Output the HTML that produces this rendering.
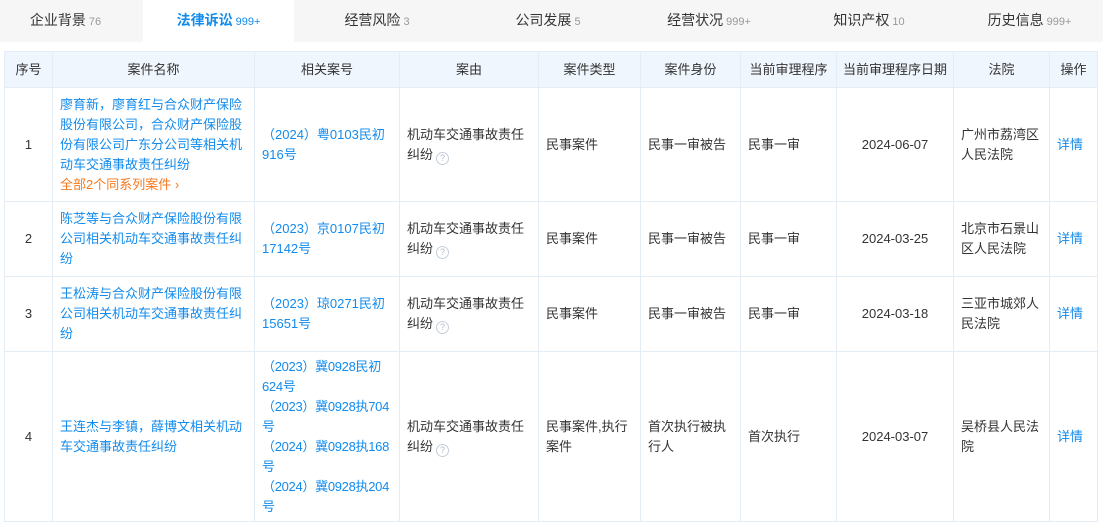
<!DOCTYPE html>
<html><head><meta charset="utf-8"><style>
*{margin:0;padding:0;box-sizing:border-box}
body{width:1103px;height:529px;overflow:hidden;background:#fff;font-family:"Liberation Sans","Noto Sans CJK SC",sans-serif;font-size:13px;color:#333}
.tabs{position:absolute;left:0;top:0;width:1103px;height:42px;background:#f6f6f6}
.tab{position:absolute;top:0;height:42px;line-height:40px;text-align:center;font-size:14px;color:#333}
.tab span{font-size:11px;color:#999;margin-left:3px}
.tab.on{background:#fff;color:#128bed;font-weight:bold}
.tab.on span{color:#128bed;font-weight:normal}
table{position:absolute;left:4px;top:51px;border-collapse:collapse;table-layout:fixed;width:1093px}
td,th{border:1px solid #e4ecf6;line-height:20px;vertical-align:middle;padding:0 7px;text-align:left}
th{background:#f0f6fd;font-weight:normal;text-align:center;height:36px;padding:0 2px}
td.c{text-align:center}
a{color:#128bed;text-decoration:none}
.or{color:#f5791f}
.q{display:inline-block;width:13px;height:13px;border:1px solid #c4cfdc;border-radius:50%;font-size:9px;line-height:11px;text-align:center;color:#b0bccb;vertical-align:-2px;margin-left:3px}
</style></head><body>
<div class="tabs">
<div class="tab" style="left:-6px;width:143px">企业背景<span>76</span></div>
<div class="tab on" style="left:143px;width:151px">法律诉讼<span>999+</span></div>
<div class="tab" style="left:294px;width:166px">经营风险<span>3</span></div>
<div class="tab" style="left:460px;width:176px">公司发展<span>5</span></div>
<div class="tab" style="left:636px;width:146px">经营状况<span>999+</span></div>
<div class="tab" style="left:782px;width:174px">知识产权<span>10</span></div>
<div class="tab" style="left:956px;width:147px">历史信息<span>999+</span></div>
</div>
<table>
<colgroup><col style="width:48px"><col style="width:202px"><col style="width:145px"><col style="width:139px"><col style="width:102px"><col style="width:100px"><col style="width:96px"><col style="width:117px"><col style="width:96px"><col style="width:48px"></colgroup>
<tr><th>序号</th><th>案件名称</th><th>相关案号</th><th>案由</th><th>案件类型</th><th>案件身份</th><th>当前审理程序</th><th>当前审理程序日期</th><th>法院</th><th>操作</th></tr>
<tr style="height:114px"><td class="c">1</td><td><a>廖育新，廖育红与合众财产保险股份有限公司，合众财产保险股份有限公司广东分公司等相关机动车交通事故责任纠纷</a><br><span class="or">全部2个同系列案件 ›</span></td><td><a>（2024）粤0103民初<br>916号</a></td><td>机动车交通事故责任纠纷<span class="q">?</span></td><td>民事案件</td><td>民事一审被告</td><td>民事一审</td><td class="c">2024-06-07</td><td>广州市荔湾区人民法院</td><td><a>详情</a></td></tr>
<tr style="height:75px"><td class="c">2</td><td><a>陈芝等与合众财产保险股份有限公司相关机动车交通事故责任纠纷</a></td><td><a>（2023）京0107民初<br>17142号</a></td><td>机动车交通事故责任纠纷<span class="q">?</span></td><td>民事案件</td><td>民事一审被告</td><td>民事一审</td><td class="c">2024-03-25</td><td>北京市石景山区人民法院</td><td><a>详情</a></td></tr>
<tr style="height:75px"><td class="c">3</td><td><a>王松涛与合众财产保险股份有限公司相关机动车交通事故责任纠纷</a></td><td><a>（2023）琼0271民初<br>15651号</a></td><td>机动车交通事故责任纠纷<span class="q">?</span></td><td>民事案件</td><td>民事一审被告</td><td>民事一审</td><td class="c">2024-03-18</td><td>三亚市城郊人民法院</td><td><a>详情</a></td></tr>
<tr style="height:170px"><td class="c">4</td><td><a>王连杰与李镇，薛博文相关机动车交通事故责任纠纷</a></td><td style="line-height:20px;white-space:nowrap;padding-right:0;letter-spacing:-0.3px"><a>（2023）冀0928民初<br>624号<br>（2023）冀0928执704<br>号<br>（2024）冀0928执168<br>号<br>（2024）冀0928执204<br>号</a></td><td>机动车交通事故责任纠纷<span class="q">?</span></td><td>民事案件,执行案件</td><td>首次执行被执行人</td><td>首次执行</td><td class="c">2024-03-07</td><td>吴桥县人民法院</td><td><a>详情</a></td></tr>
</table>
</body></html>
